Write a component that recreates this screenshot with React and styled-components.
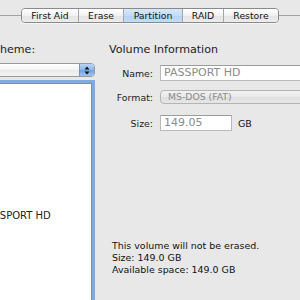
import React from "react";
import styled, { createGlobalStyle, css } from "styled-components";

const GlobalStyle = createGlobalStyle`
  html, body {
    margin: 0;
    padding: 0;
    background: #e8e8e8;
  }
  body {
    font-family: "DejaVu Sans", "Liberation Sans", sans-serif;
    color: #111;
  }
`;

const Window = styled.div`
  width: 300px;
  height: 300px;
  overflow: hidden;
  background: #e8e8e8;
`;

const TabRow = styled.div`
  display: flex;
  align-items: center;
  padding-top: 8px;
  height: 15px;
`;

const Rule = styled.div`
  flex: 1;
  height: 1px;
  background: #a3a3a3;
`;

const Tabs = styled.div`
  display: flex;
  height: 15px;
  border: 1px solid #8a8a8a;
  border-radius: 4px;
  overflow: hidden;
  box-sizing: border-box;
  box-shadow: 0 1px 0 rgba(255, 255, 255, 0.6);
`;

const Tab = styled.div`
  display: flex;
  align-items: center;
  justify-content: center;
  width: ${(p) => p.w}px;
  font-size: 9.3px;
  color: #151515;
  background: linear-gradient(#ffffff, #f1f1f1 50%, #e4e4e4 51%, #ececec);
  & + & {
    border-left: 1px solid #a6a6a6;
  }
  ${(p) =>
    p.active &&
    css`
      background: linear-gradient(#d8e8fb, #c3dcf8 50%, #b2d1f4 51%, #c4ddf8);
      border-left: 1px solid #7d9cc4;
    `}
`;

const Content = styled.div`
  display: grid;
  grid-template-columns: 155px 1fr;
  column-gap: 14px;
  margin-top: 20px;
  margin-left: -60px;
`;

const Column = styled.div`
  display: flex;
  flex-direction: column;
`;

const Heading = styled.div`
  font-size: 11.1px;
  line-height: 14px;
  height: 14px;
  color: #222;
  white-space: nowrap;
  padding-left: ${(p) => p.indent || 0}px;
`;

const Popup = styled.div`
  display: flex;
  margin-top: 6px;
  height: 14px;
  box-sizing: border-box;
  border: 1px solid #9a9a9a;
  border-radius: 4px;
  overflow: hidden;
  background: linear-gradient(#ffffff, #f3f3f3 50%, #e9e9e9 51%, #f4f4f4);
`;

const PopupBody = styled.div`
  flex: 1;
`;

const PopupArrows = styled.div`
  width: 14px;
  display: flex;
  align-items: center;
  justify-content: center;
  background: linear-gradient(#b9d5f5, #8db8ec 50%, #6ea2e3 51%, #9cc4f0);
  border-left: 1px solid #6f93c2;
`;

const ListBox = styled.div`
  margin-top: 6px;
  margin-right: 3px;
  height: 240px;
  background: #fff;
  border: 1px solid #7d8ea3;
  box-shadow: 0 0 0 3px #80aae0;
  display: flex;
  justify-content: center;
  padding-top: 126px;
  box-sizing: border-box;
`;

const ListText = styled.div`
  font-size: 10px;
  color: #222;
  white-space: nowrap;
`;

const Form = styled.div`
  display: grid;
  grid-template-columns: 44px 1fr;
  column-gap: 7px;
  margin-top: 8px;
  align-items: center;
`;

const Label = styled.div`
  font-size: 9.4px;
  color: #222;
  text-align: right;
  white-space: nowrap;
  margin-top: ${(p) => p.top || 0}px;
`;

const Field = styled.div`
  display: flex;
  align-items: center;
  gap: 6px;
  margin-top: ${(p) => p.top || 0}px;
`;

const TextInput = styled.div`
  height: 16px;
  width: ${(p) => (p.w ? `${p.w}px` : "200px")};
  box-sizing: border-box;
  background: #fff;
  border: 1px solid #b9b9b9;
  border-top-color: #9c9c9c;
  font-size: 11px;
  line-height: 14px;
  color: #8c8c8c;
  padding-left: 3px;
  white-space: nowrap;
`;

const FormatPopup = styled.div`
  height: 14px;
  width: 200px;
  box-sizing: border-box;
  border: 1px solid #b4b4b4;
  border-radius: 4px;
  background: linear-gradient(#f2f2f2, #e9e9e9 50%, #dfdfdf 51%, #e6e6e6);
  font-size: 9.3px;
  line-height: 12px;
  color: #8a8a8a;
  padding-left: 7px;
  white-space: nowrap;
`;

const Unit = styled.div`
  font-size: 9.5px;
  color: #111;
`;

const Info = styled.div`
  margin-top: 109px;
  font-size: 9.45px;
  line-height: 12px;
  color: #111;
  padding-left: 3px;
  white-space: nowrap;
`;

const tabs = [
  { label: "First Aid", w: 56 },
  { label: "Erase", w: 44 },
  { label: "Partition", w: 58, active: true },
  { label: "RAID", w: 40 },
  { label: "Restore", w: 54 },
];

export default function App() {
  return (
    <Window>
      <GlobalStyle />
      <TabRow>
        <Rule />
        <Tabs>
          {tabs.map((t) => (
            <Tab key={t.label} w={t.w} active={t.active}>
              {t.label}
            </Tab>
          ))}
        </Tabs>
        <Rule />
      </TabRow>
      <Content>
        <Column>
          <Heading indent={2}>Volume Scheme:</Heading>
          <Popup>
            <PopupBody />
            <PopupArrows>
              <svg width="6" height="9" viewBox="0 0 6 9">
                <path d="M3 0.5 L5.5 3.5 H0.5 Z M3 8.5 L5.5 5.5 H0.5 Z" fill="#111" />
              </svg>
            </PopupArrows>
          </Popup>
          <ListBox>
            <ListText>PASSPORT HD</ListText>
          </ListBox>
        </Column>
        <Column>
          <Heading>Volume Information</Heading>
          <Form>
            <Label>Name:</Label>
            <Field>
              <TextInput>PASSPORT HD</TextInput>
            </Field>
            <Label top={9}>Format:</Label>
            <Field top={9}>
              <FormatPopup>MS-DOS (FAT)</FormatPopup>
            </Field>
            <Label top={11}>Size:</Label>
            <Field top={11}>
              <TextInput w={72}>149.05</TextInput>
              <Unit>GB</Unit>
            </Field>
          </Form>
          <Info>
            This volume will not be erased.
            <br />
            Size: 149.0 GB
            <br />
            Available space: 149.0 GB
          </Info>
        </Column>
      </Content>
    </Window>
  );
}
